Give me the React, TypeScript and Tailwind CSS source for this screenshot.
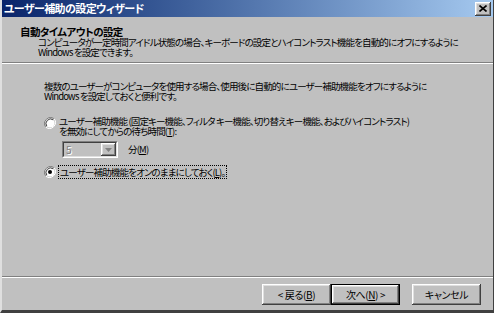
import React from 'react';

const jp = { fontFamily: '"Noto Sans CJK JP", "Noto Sans", sans-serif', fontFeatureSettings: '"palt"' } as React.CSSProperties;

const raised =
    'shadow-[inset_-1px_-1px_#404040,inset_1px_1px_#ffffff,inset_-2px_-2px_#808080,inset_2px_2px_#dfdfdf]';

const Radio: React.FC<{ checked?: boolean }> = ({ checked }) => (
    <svg width="12" height="12" viewBox="0 0 12 12" className="shrink-0">
        <path d="M10.2 1.8 A6 6 0 0 0 1.8 10.2" fill="none" stroke="#808080" strokeWidth="1" />
        <path d="M1.8 10.2 A6 6 0 0 0 10.2 1.8" fill="none" stroke="#ffffff" strokeWidth="1" />
        <circle cx="6" cy="6" r="4.6" fill="#ffffff" />
        <path d="M9.2 2.8 A4.6 4.6 0 0 0 2.8 9.2" fill="none" stroke="#404040" strokeWidth="1" />
        {checked && <circle cx="6" cy="6" r="2" fill="#000000" />}
    </svg>
);

const Button: React.FC<{ children: React.ReactNode; primary?: boolean }> = ({ children, primary }) => (
    <div className={`w-[69px] h-[21px] ${primary ? 'border border-black' : ''}`}>
        <div className={`w-full h-full bg-[#c0c0c0] ${raised} flex items-center justify-center text-[10px] leading-none text-black tracking-[-0.4px]`}>
            {children}
        </div>
    </div>
);

export default function App() {
    return (
        <div className="w-[494px] h-[313px] bg-[#c0c0c0] flex flex-col overflow-hidden border-l-2 border-l-[#dfdfdf] border-b-[3px] border-b-[#404040] border-r border-r-[#404040]" style={jp}>
            {/* Title bar */}
            <div className="h-[17px] shrink-0 bg-gradient-to-r from-[#0a246a] to-[#a6caf0] flex items-center justify-between pl-[2px] pr-[2px]">
                <span className="text-white font-bold text-[11px] leading-none tracking-[-0.6px]">ユーザー補助の設定ウィザード</span>
                <div className={`w-[16px] h-[14px] bg-[#c0c0c0] ${raised} flex items-center justify-center`}>
                    <svg width="8" height="7" viewBox="0 0 8 7">
                        <path d="M0.5 0.5 L7.5 6.5 M7.5 0.5 L0.5 6.5" stroke="#000" strokeWidth="1.6" />
                    </svg>
                </div>
            </div>

            {/* Header */}
            <div className="h-[45px] shrink-0 pl-[18px] pt-[9px] text-black">
                <div className="font-bold text-[10.5px] leading-[11px] tracking-[-0.6px]">自動タイムアウトの設定</div>
                <div className="pl-[18px] text-[9.5px] leading-[10px] tracking-[-0.85px] whitespace-nowrap">
                    コンピュータが一定時間アイドル状態の場合、キーボードの設定とハイコントラスト機能を自動的にオフにするように
                    <br />
                    Windows を設定できます。
                </div>
            </div>
            <div className="h-[2px] shrink-0 border-t border-t-[#808080] border-b border-b-white" />

            {/* Body */}
            <div className="flex-1 pl-[42px] pt-[17px] text-[9.5px] text-black tracking-[-0.85px]">
                <p className="leading-[10px] whitespace-nowrap">
                    複数のユーザーがコンピュータを使用する場合、使用後に自動的にユーザー補助機能をオフにするように
                    <br />
                    Windows を設定しておくと便利です。
                </p>

                <div className="mt-[15px] flex items-start gap-[3px]">
                    <div className="pt-[1px]"><Radio /></div>
                    <div className="leading-[10px] whitespace-nowrap">
                        ユーザー補助機能 (固定キー機能、フィルタ キー機能、切り替えキー機能、およびハイコントラスト)
                        <br />
                        を無効にしてからの待ち時間(<u>T</u>):
                    </div>
                </div>

                <div className="mt-[5px] ml-[18px] flex items-center gap-[10px]">
                    <div className="w-[56px] h-[17px] border-t border-l border-t-[#808080] border-l-[#808080] border-b border-r border-b-white border-r-white">
                        <div className="w-full h-full border-t border-l border-t-[#404040] border-l-[#404040] border-b border-r border-b-[#dfdfdf] border-r-[#dfdfdf] flex">
                            <span className="flex-1 pl-[2px] text-[#808080] text-[10px] leading-[13px] [text-shadow:1px_1px_#ffffff]">5</span>
                            <div className={`w-[15px] h-full bg-[#c0c0c0] ${raised} flex items-center justify-center`}>
                                <svg width="7" height="4" viewBox="0 0 7 4">
                                    <path d="M0 0 H7 L3.5 4 Z" fill="#808080" />
                                </svg>
                            </div>
                        </div>
                    </div>
                    <span className="leading-none">分(<u>M</u>)</span>
                </div>

                <div className="mt-[8px] flex items-center gap-[3px]">
                    <Radio checked />
                    <span className="leading-[10px] px-[1px] py-[1px] outline outline-1 outline-dotted outline-black whitespace-nowrap">
                        ユーザー補助機能をオンのままにしておく(<u>L</u>)。
                    </span>
                </div>
            </div>

            {/* Bottom separator + buttons */}
            <div className="h-[2px] shrink-0 border-t border-t-[#808080] border-b border-b-white" />
            <div className="h-[32px] shrink-0 flex items-center pl-[260px] pt-[1px]">
                <Button>&lt; 戻る(<u>B</u>)</Button>
                <Button primary>次へ(<u>N</u>) &gt;</Button>
                <div className="ml-[12px]"><Button>キャンセル</Button></div>
            </div>
        </div>
    );
}
